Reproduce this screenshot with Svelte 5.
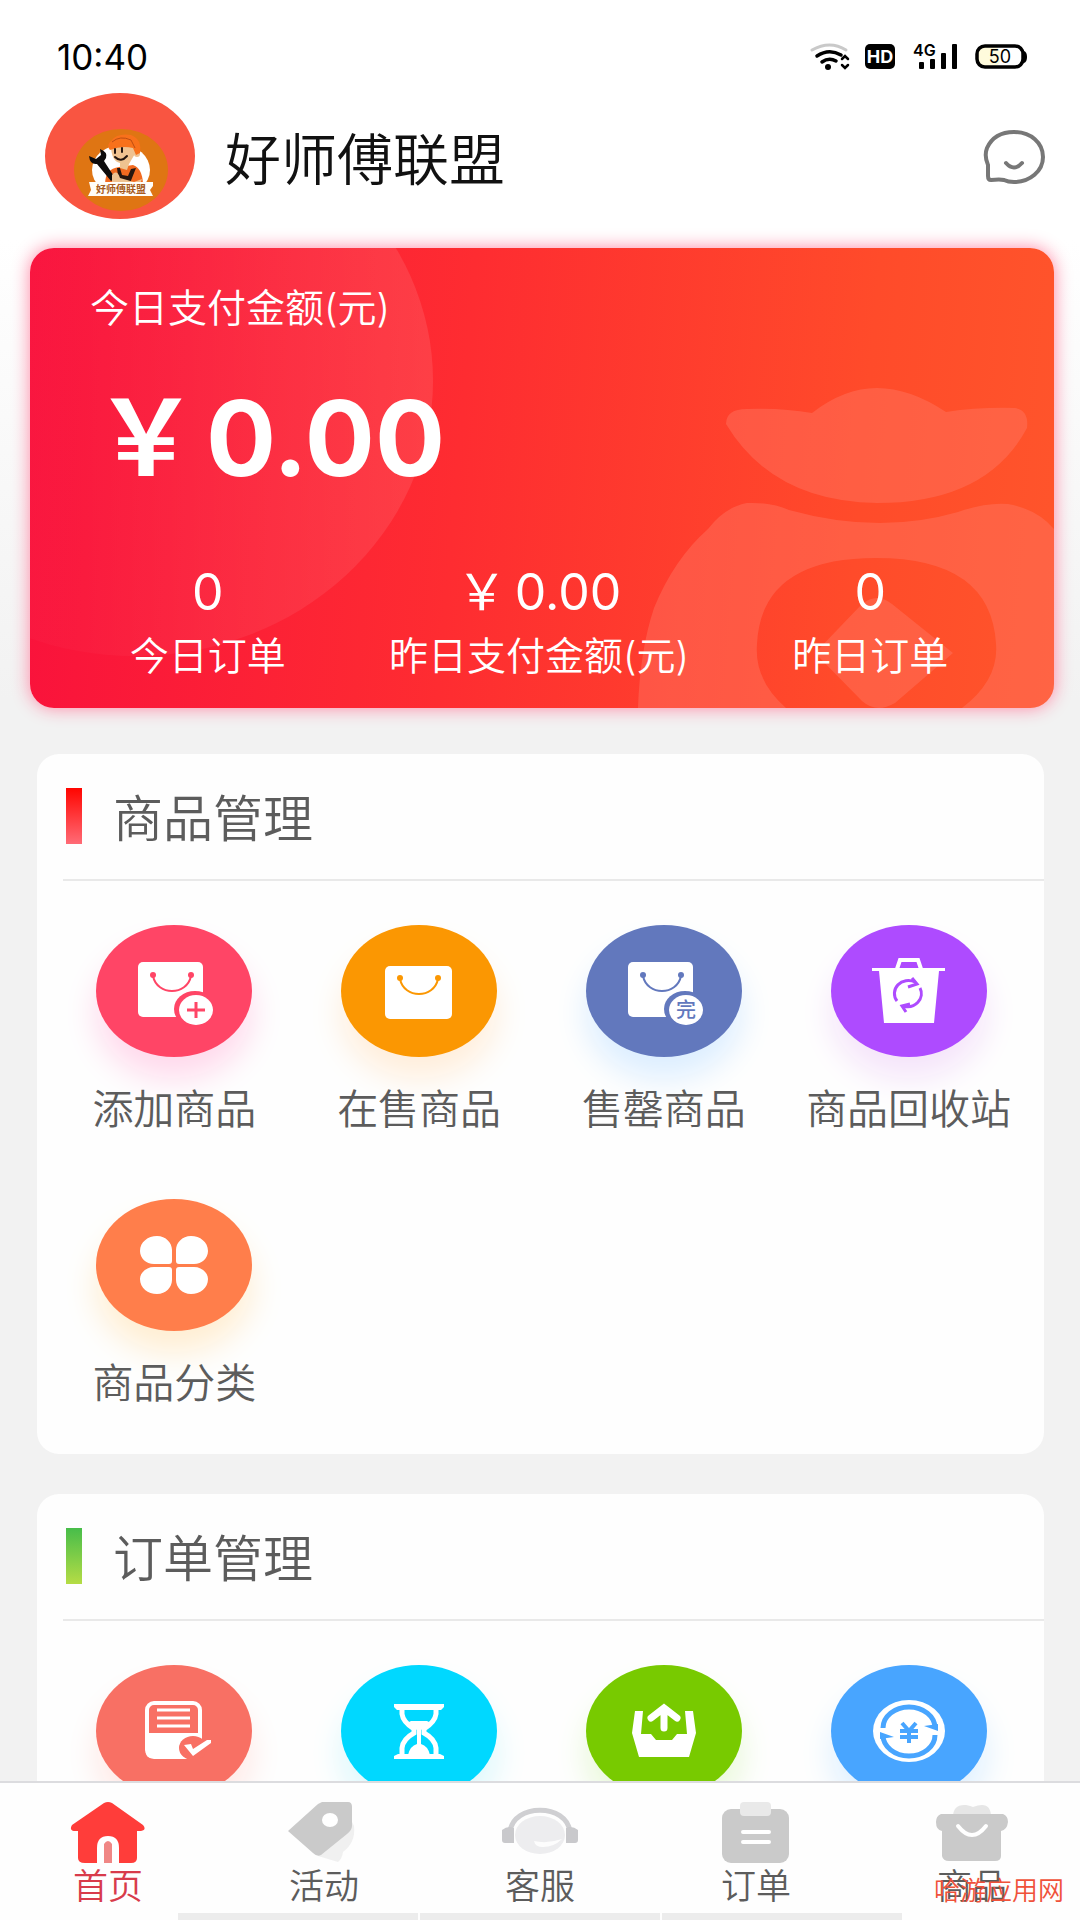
<script lang="ts">
	type Tile = {
		label: string;
		icon: string;
		color: string;
		glow: string;
		hideLabel?: boolean;
	};

	const goods: Tile[] = [
		{ label: '添加商品', icon: 'add', color: '#ff4566', glow: '#ffd9ec' },
		{ label: '在售商品', icon: 'sale', color: '#fb9702', glow: '#ffeedb' },
		{ label: '售罄商品', icon: 'soldout', color: '#6278bd', glow: '#dceeff' },
		{ label: '商品回收站', icon: 'recycle', color: '#ae4bff', glow: '#f5e4fa' },
		{ label: '商品分类', icon: 'category', color: '#ff7e4b', glow: '#ffeed2' }
	];

	const orders: Tile[] = [
		{ label: '全部订单', icon: 'all', color: '#f87064', glow: '#ffe8e5', hideLabel: true },
		{ label: '待处理', icon: 'waiting', color: '#00d8ff', glow: '#dcf8fc', hideLabel: true },
		{ label: '待发货', icon: 'ship', color: '#78ca00', glow: '#e8f8d8', hideLabel: true },
		{ label: '退款', icon: 'refund', color: '#48a5ff', glow: '#def0ff', hideLabel: true }
	];

	const sections = [
		{ title: '商品管理', accent: 'red', tiles: goods },
		{ title: '订单管理', accent: 'green', tiles: orders }
	];

	const stats = [
		{ value: '0', label: '今日订单' },
		{ currency: '￥', value: '0.00', label: '昨日支付金额(元)' },
		{ value: '0', label: '昨日订单' }
	];

	const tabs = [
		{ id: 'home', label: '首页' },
		{ id: 'activity', label: '活动' },
		{ id: 'service', label: '客服' },
		{ id: 'order', label: '订单' },
		{ id: 'goods', label: '商品' }
	];

	let activeTab = $state('home');
</script>

<div class="app">
	<div class="scroll">
		<div class="status">
			<span class="time">10:40</span>
			<svg class="status-icons" viewBox="0 0 220 30" aria-hidden="true">
				<g fill="none" stroke-linecap="round">
					<path d="M4 8Q22-2 38 8" stroke="#c9c9c9" stroke-width="3" />
					<path d="M9 14Q21 6 33 13M14 20Q21 15 28 19" stroke="#000" stroke-width="3.5" />
					<path d="m34 17 3-3 3 3M34 23l3 3 3-3" stroke="#000" stroke-width="2.5" />
				</g>
				<circle cx="20" cy="25" r="3" />
				<rect x="57" y="2" width="30" height="25" rx="5" />
				<text x="72" y="21" class="hd" text-anchor="middle">HD</text>
				<text x="105" y="14" class="net">4G</text>
				<rect x="111" y="20" width="5" height="7" rx="1" />
				<rect x="122" y="17" width="5" height="10" rx="1" />
				<rect x="133" y="11" width="5" height="16" rx="1" />
				<rect x="144" y="2" width="5" height="25" rx="1" />
				<rect x="170" y="5" width="22" height="19" rx="6" fill="#fffbdc" />
				<rect x="169" y="4" width="46" height="21" rx="8" fill="none" stroke="#000" stroke-width="3.5" />
				<path d="M216 9q3 1 3 6t-3 6z" />
				<text x="192" y="21" class="battery" text-anchor="middle">50</text>
			</svg>
		</div>

		<header>
			<svg class="avatar" viewBox="0 0 150 127" role="img" aria-label="好师傅联盟">
				<ellipse cx="75" cy="63" rx="75" ry="63" fill="#f95541" />
				<ellipse cx="76" cy="77" rx="47" ry="41" fill="#df7513" />
				<ellipse cx="76" cy="77" rx="29" ry="25" fill="#fff" />
				<path d="M60 91q0-15 14-17l14-2q9 3 10 18z" fill="#f26a20" />
				<path d="m72 75 2 15h11l6-15-5 1-3 7-6-1-2-7z" fill="#26160f" />
				<path d="M66 52q8-8 22-5l3 12-7 12-2 6-7-2v-5q-9-2-9-18z" fill="#efc290" />
				<circle cx="92" cy="61" r="3" fill="#efc290" />
				<path d="M65 57q-4-5 1-9 6-8 20-6 11 4 9 18l-4 2-3-7q-11-3-23 2z" fill="#f8711b" />
				<path d="M67 49q8-7 19-2l4 8" fill="none" stroke="#bd4d12" stroke-width="1" />
				<path d="M70 56v4M77 55v4M70 64q6 6 12-1" fill="none" stroke="#23150f" stroke-width="2" stroke-linecap="round" />
				<path d="m59 68 11 17-4 3-14-17q-7 1-8-8l7 3 5-4-1-6q8 3 6 9z" fill="#0d0b0b" />
				<path d="M67 82q5-6 8 3l14 4 8-3-2 5H67z" fill="#efc290" />
				<path d="M44 89h64v4l-3 4 3 6H43l3-6z" fill="#fffdf8" />
				<text x="76" y="100" text-anchor="middle" class="ribbon">好师傅联盟</text>
			</svg>
			<h1>好师傅联盟</h1>
			<button class="chat" aria-label="消息">
				<svg viewBox="0 0 64 54">
					<path d="M6 35Q2 26 5 18C10 7 20 2 32 2c17 0 29 11 29 25S48 52 32 52q-6 0-10-2-4-1-13 0-3 0-3-4z" />
					<path d="M24 33q8 9 16 0" />
				</svg>
			</button>
		</header>

		<section class="summary">
			<svg class="bag" viewBox="0 0 1024 460" preserveAspectRatio="xMaxYMax slice" aria-hidden="true">
				<defs>
					<linearGradient id="bubble">
						<stop offset="0.4" stop-color="#fff" stop-opacity="0.02" />
						<stop offset="1" stop-color="#fff" stop-opacity="0.1" />
					</linearGradient>
				</defs>
				<ellipse cx="105" cy="133" rx="298" ry="275" fill="url(#bubble)" />
				<g fill="#ff7a66" fill-opacity="0.42">
					<path d="M696 176q0-15 21-15 35-1 65 4 32-25 65-25t69 24q33-5 69-4 14 2 12 20-40 75-150 75-104-1-151-79z" />
					<path fill-rule="evenodd" d="M608 460q2-58 16-100 20-49 54-79 17-22 39-26 23-1 42 7 90 25 169 2 29-10 50-8 29 5 46 25v179h-92q37-28 34-64-5-86-120-86T727 396q-3 36 29 64zM785 405l47-49q15-12 30 0l61 49-58 50q-9 5-16 5-9 0-17-7z" />
				</g>
			</svg>
			<p class="caption">今日支付金额(元)</p>
			<p class="amount"><span class="currency">￥</span>0.00</p>
			<div class="stats">
				{#each stats as stat (stat.label)}
					<div class="stat">
						<strong>{#if stat.currency}<span class="currency">{stat.currency}</span>{/if}{stat.value}</strong>
						<p>{stat.label}</p>
					</div>
				{/each}
			</div>
		</section>

		{#each sections as section (section.title)}
			<section class="panel">
				<h2 class={section.accent}><span>{section.title}</span></h2>
				<div class="tiles">
					{#each section.tiles as tile (tile.icon)}
						<button class="tile" aria-label={tile.label} style="--color: {tile.color}; --glow: {tile.glow}">
							<span class="disc">
								<svg viewBox="0 0 156 132" aria-hidden="true">
									{#if tile.icon === 'add' || tile.icon === 'soldout'}
										<rect x="42" y="37" width="65" height="55" rx="5" fill="#fff" />
										<path d="M57 51c4 20 34 20 38 0" class="line thin" />
										<circle cx="57" cy="50" r="3" class="ink" />
										<circle cx="95" cy="50" r="3" class="ink" />
										<ellipse cx="99" cy="84" rx="21" ry="18" class="ink" />
										<ellipse cx="100" cy="85" rx="17" ry="15" fill="#fff" />
										{#if tile.icon === 'add'}
											<path d="M91 85h18M100 77v16" class="line" />
										{:else}
											<text x="100" y="92" text-anchor="middle" class="done">完</text>
										{/if}
									{:else if tile.icon === 'sale'}
										<rect x="44" y="41" width="67" height="53" rx="5" fill="#fff" />
										<path d="M59 54c4 20 34 20 38 0" class="line thin" />
										<circle cx="59" cy="53" r="3" class="ink" />
										<circle cx="97" cy="53" r="3" class="ink" />
									{:else if tile.icon === 'recycle'}
										<path d="M41 43h73v3h-6l-5 52H53l-5-52h-7z" fill="#fff" />
										<path d="m66 44 3-9h18l3 9" fill="none" stroke="#fff" stroke-width="4" />
										<path d="M66 76A14 13 0 0 1 84 57M89 63A14 13 0 0 1 72 81" class="line" />
										<path d="m81 53 5 6-9 3M79 79l-8 2 4 6" class="line" />
									{:else if tile.icon === 'category'}
										<path
											fill="#fff"
											d="M73 65H58c-8 0-14-6-14-13 0-9 8-15 17-15s15 7 15 14v11q0 3-3 3zM83 65h15c8 0 14-6 14-13 0-9-8-15-17-15s-15 7-15 14v11q0 3 3 3zM73 68H58c-8 0-14 6-14 12 0 9 8 15 17 15s15-7 15-14V71q0-3-3-3zM83 68h15c8 0 14 6 14 12 0 9-8 15-17 15s-15-7-15-14V71q0-3 3-3z"
										/>
									{:else if tile.icon === 'all'}
										<rect x="51" y="38" width="53" height="54" rx="7" fill="none" stroke="#fff" stroke-width="4" />
										<path d="M50 68h55v20q0 5-6 5H56q-6 0-6-6z" fill="#fff" />
										<path d="M61 45h33M61 53h33M61 61h33" stroke="#fff" stroke-width="3" />
										<ellipse cx="97" cy="83" rx="14" ry="12" class="ink" />
										<path d="m88 80 7-1 2 5 14-9h4v3L97 91z" fill="#fff" />
									{:else if tile.icon === 'waiting'}
										<path d="M53 39h50v3l-3 3H56l-3-3zM53 94v-3l4-2h42l4 2v3z" fill="#fff" />
										<path d="M61 44v5q1 8 12 15v4q-11 6-12 15v7M95 44v5q-1 8-12 15v4q11 6 12 15v7" fill="none" stroke="#fff" stroke-width="5" />
										<path d="M66 58l4-2h16l4 2-10 7v14q7 2 9 11H67q2-9 9-11V65z" fill="#fff" />
									{:else if tile.icon === 'ship'}
										<path d="M49 46h8l-2 23h10l5 6h16l5-6h10l-2-23h8l3 22-7 24H53l-7-24z" fill="#fff" />
										<path d="M78 63V44M65 53l13-10 13 10" fill="none" stroke="#fff" stroke-width="7" stroke-linecap="round" />
									{:else}
										<ellipse cx="78" cy="66" rx="36" ry="31" fill="#fff" />
										<path d="M52 63A26 21 0 0 1 104 63M52 70A26 21 0 0 0 104 70" class="line thick" />
										<path d="m93 61 14 5v-7zM63 72l-14-5v7z" class="ink" />
										<path d="m71 58 7 8 7-8M69 66h18M69 72h18M78 66v12" class="line yen" />
									{/if}
								</svg>
							</span>
							{#if !tile.hideLabel}
								<span class="label">{tile.label}</span>
							{/if}
						</button>
					{/each}
				</div>
			</section>
		{/each}
	</div>

	<nav>
		{#each tabs as tab (tab.id)}
			<button class="tab" class:active={activeTab === tab.id} onclick={() => (activeTab = tab.id)}>
				<svg viewBox="0 0 80 62" aria-hidden="true">
					{#if tab.id === 'home'}
						<path fill="#ff3d3a" d="M36 1q4-2 8 0l31 22q4 5-2 6h-4v27q0 5-6 5H17q-7 0-7-5V29H6q-5-1-2-6z" />
						<path fill="#fff" d="M29 61V46q0-12 11-12t11 12v15z" />
						<path fill="#f08785" d="M36 61V42q4-6 8 0v19z" />
					{:else if tab.id === 'activity'}
						<path fill="#f0f0f0" d="m34 54 20 6q4-3 5-10 13-10 11-26l-4-8z" />
						<path fill="#cacaca" d="M4 29 34 2l4-2h26q4 0 4 5v19q0 4-5 8L37 53q-4 2-8-2z" />
						<ellipse cx="46" cy="18" rx="8" ry="7" fill="#fff" />
					{:else if tab.id === 'service'}
						<ellipse cx="40" cy="33" rx="25" ry="19" fill="#ededef" />
						<path fill="#fdfdfd" d="M34 39q13 3 28-2-8 8-19 8-8 0-9-6z" />
						<path d="M10 30C13 1 67 1 70 30" fill="none" stroke="#cfcfd2" stroke-width="5" />
						<path fill="#c9c9cc" d="M2 28q6-5 12-2v15H5q-3 0-3-3zM78 28q-6-5-12-2v15h9q3 0 3-3z" />
					{:else if tab.id === 'order'}
						<rect x="6" y="7" width="67" height="54" rx="9" fill="#cacaca" />
						<rect x="24" y="0" width="31" height="14" rx="4" fill="#e9e9e9" />
						<path d="M27 30h26M27 40h26" stroke="#fff" stroke-width="4" stroke-linecap="round" />
					{:else}
						<path fill="#e6e6e6" d="M21 15q0-13 13-12 5 1 7 2 18-7 18 10z" />
						<path fill="#cacaca" d="M9 12h62q5 2 5 8-1 8-7 9v25q0 5-6 5H17q-6 0-7-5V29q-6-1-6-9 0-6 5-8z" />
						<path d="M26 24q14 18 28 0" fill="none" stroke="#fff" stroke-width="4" stroke-linecap="round" />
					{/if}
				</svg>
				<span>{tab.label}</span>
			</button>
		{/each}
		<div class="gesture"><i></i><i></i><i></i></div>
		<span class="watermark">哈游应用网</span>
	</nav>
</div>

<style>
	:global(body) {
		margin: 0;
		background: #f2f2f2;
	}

	.app {
		display: flex;
		flex-direction: column;
		height: 100vh;
		overflow: hidden;
		font-family: Inter, 'Noto Sans CJK SC', sans-serif;
		font-weight: 350;
		color: #5c5c5c;
		background: linear-gradient(180deg, #fff 0, #fff 240px, #f2f2f2 700px);
	}

	.scroll {
		flex: 1;
		min-height: 0;
		overflow-y: auto;
		scrollbar-width: none;
	}

	button {
		padding: 0;
		border: 0;
		background: none;
		font: inherit;
		color: inherit;
		cursor: pointer;
	}

	svg {
		display: block;
	}

	h1,
	h2,
	p {
		margin: 0;
		font-weight: inherit;
	}

	/* Status bar */
	.status {
		display: flex;
		justify-content: space-between;
		align-items: center;
		padding: 37px 52px 0 57px;
		height: 40px;
		color: #000;
	}

	.time {
		font-size: 35px;
		font-weight: 400;
	}

	.status-icons {
		width: 220px;
		height: 30px;
		overflow: visible;
	}

	.hd {
		font: 700 18px Inter, sans-serif;
		fill: #fff;
	}

	.net {
		font: 600 16px Inter, sans-serif;
	}

	.battery {
		font: 400 18px Inter, sans-serif;
	}

	/* Header */
	header {
		display: flex;
		align-items: center;
		padding: 16px 34px 28px 45px;
	}

	.avatar {
		width: 150px;
		height: 127px;
	}

	.ribbon {
		font: 700 10px 'Noto Sans CJK SC', sans-serif;
		fill: #a65b21;
	}

	h1 {
		flex: 1;
		margin-left: 30px;
		padding-top: 6px;
		font-size: 56px;
		line-height: 64px;
		color: #111;
	}

	.chat svg {
		width: 64px;
		height: 54px;
		fill: none;
		stroke: #777;
		stroke-width: 4;
		stroke-linecap: round;
	}

	/* Payment card */
	.summary {
		position: relative;
		margin: 0 26px 46px 30px;
		padding: 34px 18px 26px 12px;
		border-radius: 24px;
		color: #fff;
		background: linear-gradient(95deg, #f9113c 0%, #fe2c31 42%, #ff4b2a 80%, #ff552b 100%);
		box-shadow: 0 0 18px #ff86a4;
	}

	.bag {
		position: absolute;
		inset: 0;
		width: 100%;
		height: 100%;
		border-radius: 24px;
	}

	.caption,
	.amount,
	.stats {
		position: relative;
	}

	.caption {
		padding-left: 48px;
		font-size: 39px;
		line-height: 52px;
	}

	.amount {
		padding-left: 52px;
		margin: 40px 0 58px;
		font-size: 104px;
		line-height: 128px;
		font-weight: 700;
	}

	.currency {
		margin-right: 8px;
	}

	.stats {
		display: grid;
		grid-template-columns: repeat(3, 1fr);
		text-align: center;
	}

	.stat strong {
		display: block;
		font-size: 50px;
		line-height: 64px;
		font-weight: 400;
	}

	.stat p {
		margin-top: 6px;
		font-size: 39px;
		line-height: 52px;
		white-space: nowrap;
	}

	/* Panels */
	.panel {
		margin: 0 36px 40px 37px;
		border-radius: 22px;
		background: #fefefe;
	}

	h2 {
		display: flex;
		align-items: center;
		margin-left: 26px;
		padding: 34px 0 35px 3px;
		border-bottom: 2px solid #e9e9e9;
		font-size: 50px;
		line-height: 56px;
	}

	h2 span {
		padding-top: 6px;
		line-height: 50px;
	}

	h2::before {
		content: '';
		width: 16px;
		height: 56px;
		margin-right: 31px;
		background: linear-gradient(180deg, #ff0500, #ff6b76);
	}

	h2.green::before {
		background: linear-gradient(180deg, #47bd4a, #b5dc45);
	}

	.tiles {
		display: grid;
		grid-template-columns: repeat(4, 1fr);
		row-gap: 66px;
		padding: 44px 13px 47px 15px;
	}

	.tile {
		display: flex;
		flex-direction: column;
		align-items: center;
	}

	.disc {
		width: 156px;
		height: 132px;
		border-radius: 50%;
		background: var(--color);
		box-shadow: 0 22px 32px var(--glow);
	}

	.disc svg {
		width: 156px;
		height: 132px;
	}

	.ink {
		fill: var(--color);
	}

	.line {
		fill: none;
		stroke: var(--color);
		stroke-width: 3;
	}

	.line.thin {
		stroke-width: 2;
	}

	.line.thick {
		stroke-width: 5;
	}

	.line.yen {
		stroke-width: 4;
	}

	.done {
		font: 500 20px 'Noto Sans CJK SC', sans-serif;
		fill: var(--color);
	}

	.label {
		margin-top: 28px;
		font-size: 41px;
		line-height: 48px;
		white-space: nowrap;
	}

	/* Tab bar */
	nav {
		position: relative;
		display: grid;
		grid-template-columns: repeat(5, 1fr);
		border-top: 2px solid #dcdcdf;
		background: #fefefe;
	}

	.tab {
		display: flex;
		flex-direction: column;
		align-items: center;
		padding-top: 19px;
		font-size: 35px;
		line-height: 44px;
	}

	.tab svg {
		width: 80px;
		height: 62px;
	}

	.tab.active {
		color: #d83b4b;
	}

	.gesture {
		grid-column: 1 / -1;
		display: flex;
		justify-content: center;
		gap: 2px;
		height: 7px;
		margin: 5px 178px 0;
	}

	.gesture i {
		flex: 1;
		background: #ececec;
	}

	.watermark {
		position: absolute;
		right: 16px;
		bottom: 11px;
		font-size: 26px;
		line-height: 36px;
		color: #f0523a;
	}
</style>
